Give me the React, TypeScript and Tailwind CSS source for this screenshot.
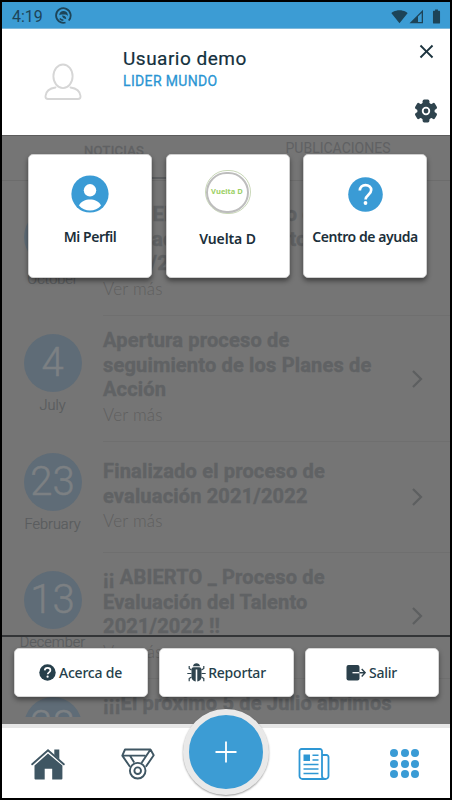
import type { ReactNode } from "react";
import { MdSignalWifi4Bar, MdBatteryFull, MdClose } from "react-icons/md";

type NewsItem = {
  day: string;
  month: string;
  title: string[];
  short?: boolean;
};

const news: NewsItem[] = [
  {
    day: "15",
    month: "October",
    title: ["¡¡ ABIERTO _ Proceso de", "Evaluación del Talento", "2021/2022 !!"],
  },
  {
    day: "4",
    month: "July",
    title: ["Apertura proceso de", "seguimiento de los Planes de", "Acción"],
  },
  {
    day: "23",
    month: "February",
    title: ["Finalizado el proceso de", "evaluación 2021/2022"],
    short: true,
  },
  {
    day: "13",
    month: "December",
    title: ["¡¡ ABIERTO _ Proceso de", "Evaluación del Talento", "2021/2022 !!"],
  },
  {
    day: "28",
    month: "June",
    title: ["¡¡¡El próximo 5 de Julio abrimos"],
  },
];

function StatusBar() {
  return (
    <div className="flex h-[27px] shrink-0 items-center border-b border-[#7fb9dc] bg-[#3c9cd4] pl-[10px] pr-[5px] text-[#1d4458]">
      <span className="w-[43px] pt-[3px] text-[16px] leading-none">4:19</span>
      <svg width="17" height="17" viewBox="0 0 17 17" fill="none" stroke="currentColor">
        <path d="M10.500 15.500a7.300 7.300 0 1 1 3.200-2" strokeWidth="1.800" />
        <path d="M4.200 8.200C4.400 5.300 6.500 3.700 9 4c2.500.3 4.200 2.300 3.800 5.200-.8-1.400-2-1.700-3.600-1.700-1.900 0-3.600-.5-5 .7z" fill="currentColor" stroke="none" />
        <path d="M7 8.600c2.200-.2 4 .9 4.300 3.200-2 .5-3.700-.8-4.300-3.200z" fill="currentColor" stroke="none" />
        <path d="M4.800 11.500c.8 1.100 2 1.700 3.600 1.800" strokeWidth="1.500" />
      </svg>
      <div className="ml-auto flex items-center pt-[2px]">
        <MdSignalWifi4Bar size={17} />
        <svg className="ml-[1px]" width="15" height="15" viewBox="0 0 15 15">
          <path d="M0.500 14.300 14 .8v13.500z" fill="currentColor" />
          <path d="M9 7.600 12.700 4v9H9z" fill="#3c9cd4" />
        </svg>
        <MdBatteryFull className="ml-[4px]" size={17} />
      </div>
    </div>
  );
}

function AvatarIcon() {
  return (
    <svg width="38" height="38" viewBox="0 0 38 38" fill="none" stroke="#d6d6d6" strokeWidth="1.900">
      <ellipse cx="19" cy="13.300" rx="9.600" ry="11.800" />
      <path d="M11.500 24.500C5.500 25.300 2 28 1.500 33c-.2 2 .8 3 2.500 3h30c1.700 0 2.700-1 2.500-3-.5-5-4-7.700-10-8.500" strokeLinecap="round" />
    </svg>
  );
}

function GearIcon() {
  return (
    <svg width="24" height="24" viewBox="0 0 24 24" fill="#2f444e">
      <circle cx="12" cy="12" r="8.700" />
      <rect x="8.600" y=".6" width="6.800" height="22.800" rx="1.600" />
      <rect x="8.600" y=".6" width="6.800" height="22.800" rx="1.600" transform="rotate(60 12 12)" />
      <rect x="8.600" y=".6" width="6.800" height="22.800" rx="1.600" transform="rotate(120 12 12)" />
      <circle cx="12" cy="12" r="3.300" stroke="#fff" strokeWidth="1.800" />
    </svg>
  );
}

function Header() {
  return (
    <header className="flex h-[106px] shrink-0 bg-white">
      <div className="flex w-[121px] justify-center pt-[34px]">
        <AvatarIcon />
      </div>
      <div className="flex-1 pt-[17px]">
        <h1 className="text-[19px] leading-[25px] tracking-[0.5px] text-[#14303d] [-webkit-text-stroke:0.2px]">Usuario demo</h1>
        <p className="text-[14px] leading-[21px] tracking-[0.350px] text-[#2a95d3] [-webkit-text-stroke:0.3px]">LIDER MUNDO</p>
      </div>
      <div className="flex w-[48px] flex-col items-center">
        <MdClose className="mt-[11px] text-[#1c333e]" size={23} />
        <div className="mt-[36px]">
          <GearIcon />
        </div>
      </div>
    </header>
  );
}

function NewsRow({ item }: { item: NewsItem }) {
  return (
    <div className={item.short ? "flex h-[111px] shrink-0" : "flex h-[126px] shrink-0"}>
      <div className={`flex w-[101px] flex-col items-center ${item.short ? "pt-[11px]" : "pt-[18px]"}`}>
        <div className="flex h-[58px] w-[58px] items-center justify-center rounded-full bg-[#5f6c77] text-[40px] font-light leading-none text-[#7c8083] [-webkit-text-stroke:0.5px]">
          {item.day}
        </div>
        <div className="mt-[5px] whitespace-nowrap text-[14.500px] font-light leading-[18px] text-[#595c5e] [-webkit-text-stroke:0.2px]">
          {item.month}
        </div>
      </div>
      <div className="flex flex-1 items-center border-b border-[#6f6f6f]">
        <div className={`h-full w-[306px] ${item.short ? "pt-[17px]" : "pt-[12px]"}`}>
          {item.title.map((line) => (
            <div
              key={line}
              className="whitespace-nowrap text-[20px] font-bold leading-[24.5px] tracking-[0.180px] text-[#606264] [-webkit-text-stroke:0.4px]"
            >
              {line}
            </div>
          ))}
          <div className="mt-[2px] font-[Lato] text-[17px] font-light leading-[22px] tracking-[0.200px] text-[#5f5f5f]">Ver más</div>
        </div>
        <svg width="14" height="20" viewBox="0 0 14 20" fill="none" stroke="#5d5f60" strokeWidth="2.200">
          <path d="M4 2l8 8-8 8" />
        </svg>
      </div>
    </div>
  );
}

function Feed() {
  return (
    <div className="flex h-[582px] flex-col overflow-hidden">
      <div className="flex h-[46px] shrink-0 border-b border-[#6c6c6c] text-[14px] text-[#606163]">
        <div className="flex w-[224px] justify-center pt-[5px]">
          <span className="h-[39px] w-[126px] border-b-2 border-[#5c5e60] text-center text-[13px] leading-[21px] tracking-[0.300px] [-webkit-text-stroke:0.4px]">
            NOTICIAS
          </span>
        </div>
        <div className="w-[224px] pt-[3px] text-center leading-[20px]">PUBLICACIONES</div>
      </div>
      <div className="mt-[9px] flex flex-col">
        {news.map((item, i) => (
          <NewsRow key={i} item={item} />
        ))}
      </div>
    </div>
  );
}

function ProfileIcon() {
  return (
    <svg width="38" height="38" viewBox="0 0 38 38">
      <circle cx="19" cy="19" r="18.600" fill="#3a9bd5" />
      <circle cx="19" cy="15.300" r="6.200" fill="#fff" />
      <path d="M8 30.500c2-4.200 6.500-5.900 11-5.900s9 1.700 11 5.900c-2.800 3.300-6.700 5-11 5s-8.200-1.700-11-5z" fill="#fff" />
    </svg>
  );
}

function BrandIcon() {
  return (
    <div className="flex h-[44px] w-[46px] items-center justify-center rounded-full border border-[#c9d8b8] pr-[1px]">
      <div className="flex h-[41px] w-[43px] items-center justify-center rounded-full border-2 border-[#bdbdbd] font-['Open_Sans'] text-[7.500px] font-bold leading-none text-[#9bcf63]">
        <span className="whitespace-nowrap">Vuelta D</span>
      </div>
    </div>
  );
}

function HelpIcon() {
  return (
    <svg width="35" height="35" viewBox="0 0 35 35" fill="none">
      <circle cx="17.500" cy="17.500" r="17.300" fill="#3a9bd5" />
      <path d="M11.800 13.500c.2-3.400 2.600-5.400 5.700-5.400 3.400 0 5.700 2.100 5.700 5 0 4.400-5.400 4.800-5.600 9.400" stroke="#fff" strokeWidth="2.700" />
      <circle cx="17.500" cy="26" r="1.900" fill="#fff" />
    </svg>
  );
}

function ActionCard({ icon, label, low }: { icon: ReactNode; label: string; low?: boolean }) {
  return (
    <div className="flex h-[124px] w-[124px] flex-col items-center rounded-[5px] border border-[#cfcfcf] bg-white shadow-[0_3px_5px_rgba(0,0,0,0.45)]">
      <div className={low ? "flex h-[74px] items-center" : "flex h-[72px] items-center pt-[6px]"}>{icon}</div>
      <span
        className={`whitespace-nowrap font-['Noto_Sans'] text-[14px] font-semibold leading-5 text-[#1b2f3a] ${
          low ? "tracking-[-0.100px]" : "tracking-[-0.450px]"
        }`}
      >
        {label}
      </span>
    </div>
  );
}

function AboutIcon() {
  return (
    <svg width="17" height="17" viewBox="0 0 17 17" fill="none">
      <circle cx="8.500" cy="8.500" r="8.200" fill="#263f4b" />
      <path d="M5.700 6.400c.1-1.700 1.300-2.600 2.900-2.600s2.800.9 2.800 2.400c0 2.100-2.700 2.100-2.700 4.100" stroke="#fff" strokeWidth="1.700" />
      <circle cx="8.600" cy="12.700" r="1.100" fill="#fff" />
    </svg>
  );
}

function BugIcon() {
  return (
    <svg width="19" height="19" viewBox="0 0 19 19" fill="none" stroke="#2f444e">
      <path d="M6 3.300C6.200 1.200 7.700.3 9.500.3s3.300.9 3.500 3z" fill="#2f444e" stroke="none" />
      <path d="M4.500 6.500c0-1.500 1-2.300 2.200-2.300h5.600c1.200 0 2.200.8 2.200 2.300v7.200c0 2.800-1.800 4.600-4.200 4.800V6.500H8.700v12c-2.400-.2-4.200-2-4.200-4.800z" fill="#2f444e" stroke="none" />
      <path d="M4.500 7 2.200 5.500V3M14.500 7l2.300-1.500V3M4.500 10.500H.3M14.500 10.500h4.200M4.500 14l-2.300 1.500v2.800M14.500 14l2.300 1.500v2.800" strokeWidth="1.200" />
    </svg>
  );
}

function ExitIcon() {
  return (
    <svg width="20" height="17" viewBox="0 0 20 17" fill="none">
      <rect x=".5" y="1" width="13" height="15.500" rx="2" fill="#2b404b" />
      <path d="M6.500 8.700h7" stroke="#fff" strokeWidth="1.300" />
      <path d="M13.500 8.700H19M15.700 5l3.500 3.700-3.500 3.700" stroke="#2b404b" strokeWidth="1.400" />
    </svg>
  );
}

function FooterButton({ icon, label }: { icon: ReactNode; label: string }) {
  return (
    <button className="flex h-[49px] w-[134.500px] items-center justify-center gap-[2.500px] rounded-[5px] border border-[#d6d6d6] bg-white shadow-[0_3px_5px_rgba(0,0,0,0.4)]">
      {icon}
      <span className="font-['Noto_Sans'] text-[14px] font-medium leading-5 tracking-[-0.200px] text-[#263f4b]">{label}</span>
    </button>
  );
}

function MenuOverlay() {
  return (
    <div className="absolute inset-0 flex flex-col border-t border-[#5c5c5c]">
      <div className="flex gap-[13.500px] pl-[26px] pt-[18px]">
        <ActionCard icon={<ProfileIcon />} label="Mi Perfil" />
        <ActionCard icon={<BrandIcon />} label="Vuelta D" low />
        <ActionCard icon={<HelpIcon />} label="Centro de ayuda" />
      </div>
      <div className="mt-auto h-[89px] border-t-2 border-[#333537]">
        <div className="flex gap-[11px] pl-[11.500px] pt-[11px]">
          <FooterButton icon={<AboutIcon />} label="Acerca de" />
          <FooterButton icon={<BugIcon />} label="Reportar" />
          <FooterButton icon={<ExitIcon />} label="Salir" />
        </div>
      </div>
    </div>
  );
}

function HomeIcon() {
  return (
    <svg width="34" height="32" viewBox="0 0 34 32" fill="none">
      <path d="M23.300 1.500h5v10l-5-4.500z" fill="#3f5663" />
      <path d="M1.200 16.300 17 2.200l15.800 14.100" stroke="#3f5663" strokeWidth="1.900" strokeLinecap="round" />
      <path d="M17 5.600 3.500 17.600V30.500a1 1 0 0 0 1 1h9.200V20.700h7.500v10.800h9.200a1 1 0 0 0 1-1V17.600z" fill="#3f5663" />
    </svg>
  );
}

function MedalIcon() {
  return (
    <svg width="34" height="32" viewBox="0 0 34 32" fill="none" stroke="#3f5663" strokeWidth="1.900" strokeLinejoin="round">
      <path d="M9 18.800 1.300 7.600 4 1.500h25.500L32.700 7.200 24.800 18.800M1.300 7.600h23M29.500 1.500 20.500 15M9 7.800l4.200 6.600" />
      <circle cx="16.700" cy="22.700" r="7.800" />
      <circle cx="16.700" cy="22.700" r="3.300" />
    </svg>
  );
}

function NewspaperIcon() {
  return (
    <svg width="32" height="32" viewBox="0 0 32 32" fill="none" stroke="#2e97d4" strokeWidth="1.800">
      <path d="M24 28V3a2 2 0 0 0-2-2H3.500a2 2 0 0 0-2 2v25a3 3 0 0 0 3 3h23a3 3 0 0 0 3-3V9a2 2 0 0 0-2-2H24M24 28a3 3 0 0 0 3 3" />
      <path d="M5.500 6.500H12v6.500H5.500z" fill="#2e97d4" stroke="none" />
      <path d="M14.500 7.300h6M14.500 12h6M5.500 16.500h15M5.500 21h15M5.500 25.500h15" strokeWidth="1.600" />
    </svg>
  );
}

function GridIcon() {
  return (
    <div className="grid grid-cols-3 gap-[2.600px]">
      {Array.from({ length: 9 }).map((_, i) => (
        <span key={i} className="h-[8px] w-[8px] rounded-full bg-[#3a9bd5]" />
      ))}
    </div>
  );
}

function BottomNav() {
  return (
    <nav className="relative flex h-[74px] shrink-0 items-center border-t-4 border-[#e6e6e6] bg-white pt-[1px]">
      <div className="flex w-[91px] justify-center">
        <HomeIcon />
      </div>
      <div className="flex w-[90px] justify-center">
        <MedalIcon />
      </div>
      <div className="w-[86px]" />
      <div className="flex w-[90px] justify-center">
        <NewspaperIcon />
      </div>
      <div className="flex w-[91px] justify-center">
        <GridIcon />
      </div>
      {/* Floating add button */}
      <button className="absolute -top-[19px] left-[181px] flex h-[86px] w-[86px] items-center justify-center rounded-full border-[6px] border-[#e9e9e9] bg-[#3c9cd4] shadow-[0_1px_2px_rgba(0,0,0,0.4)]">
        <svg width="22" height="22" viewBox="0 0 22 22" stroke="#fff" strokeWidth="1.800">
          <path d="M11 .5v21M.5 11h21" />
        </svg>
      </button>
    </nav>
  );
}

export default function App() {
  return (
    <main className="flex h-[800px] w-[452px] flex-col overflow-hidden border-2 border-black bg-white font-[Roboto]">
      <StatusBar />
      <Header />
      <section className="relative h-[589px] shrink-0 bg-[#757575]">
        <Feed />
        <MenuOverlay />
      </section>
      <BottomNav />
    </main>
  );
}
